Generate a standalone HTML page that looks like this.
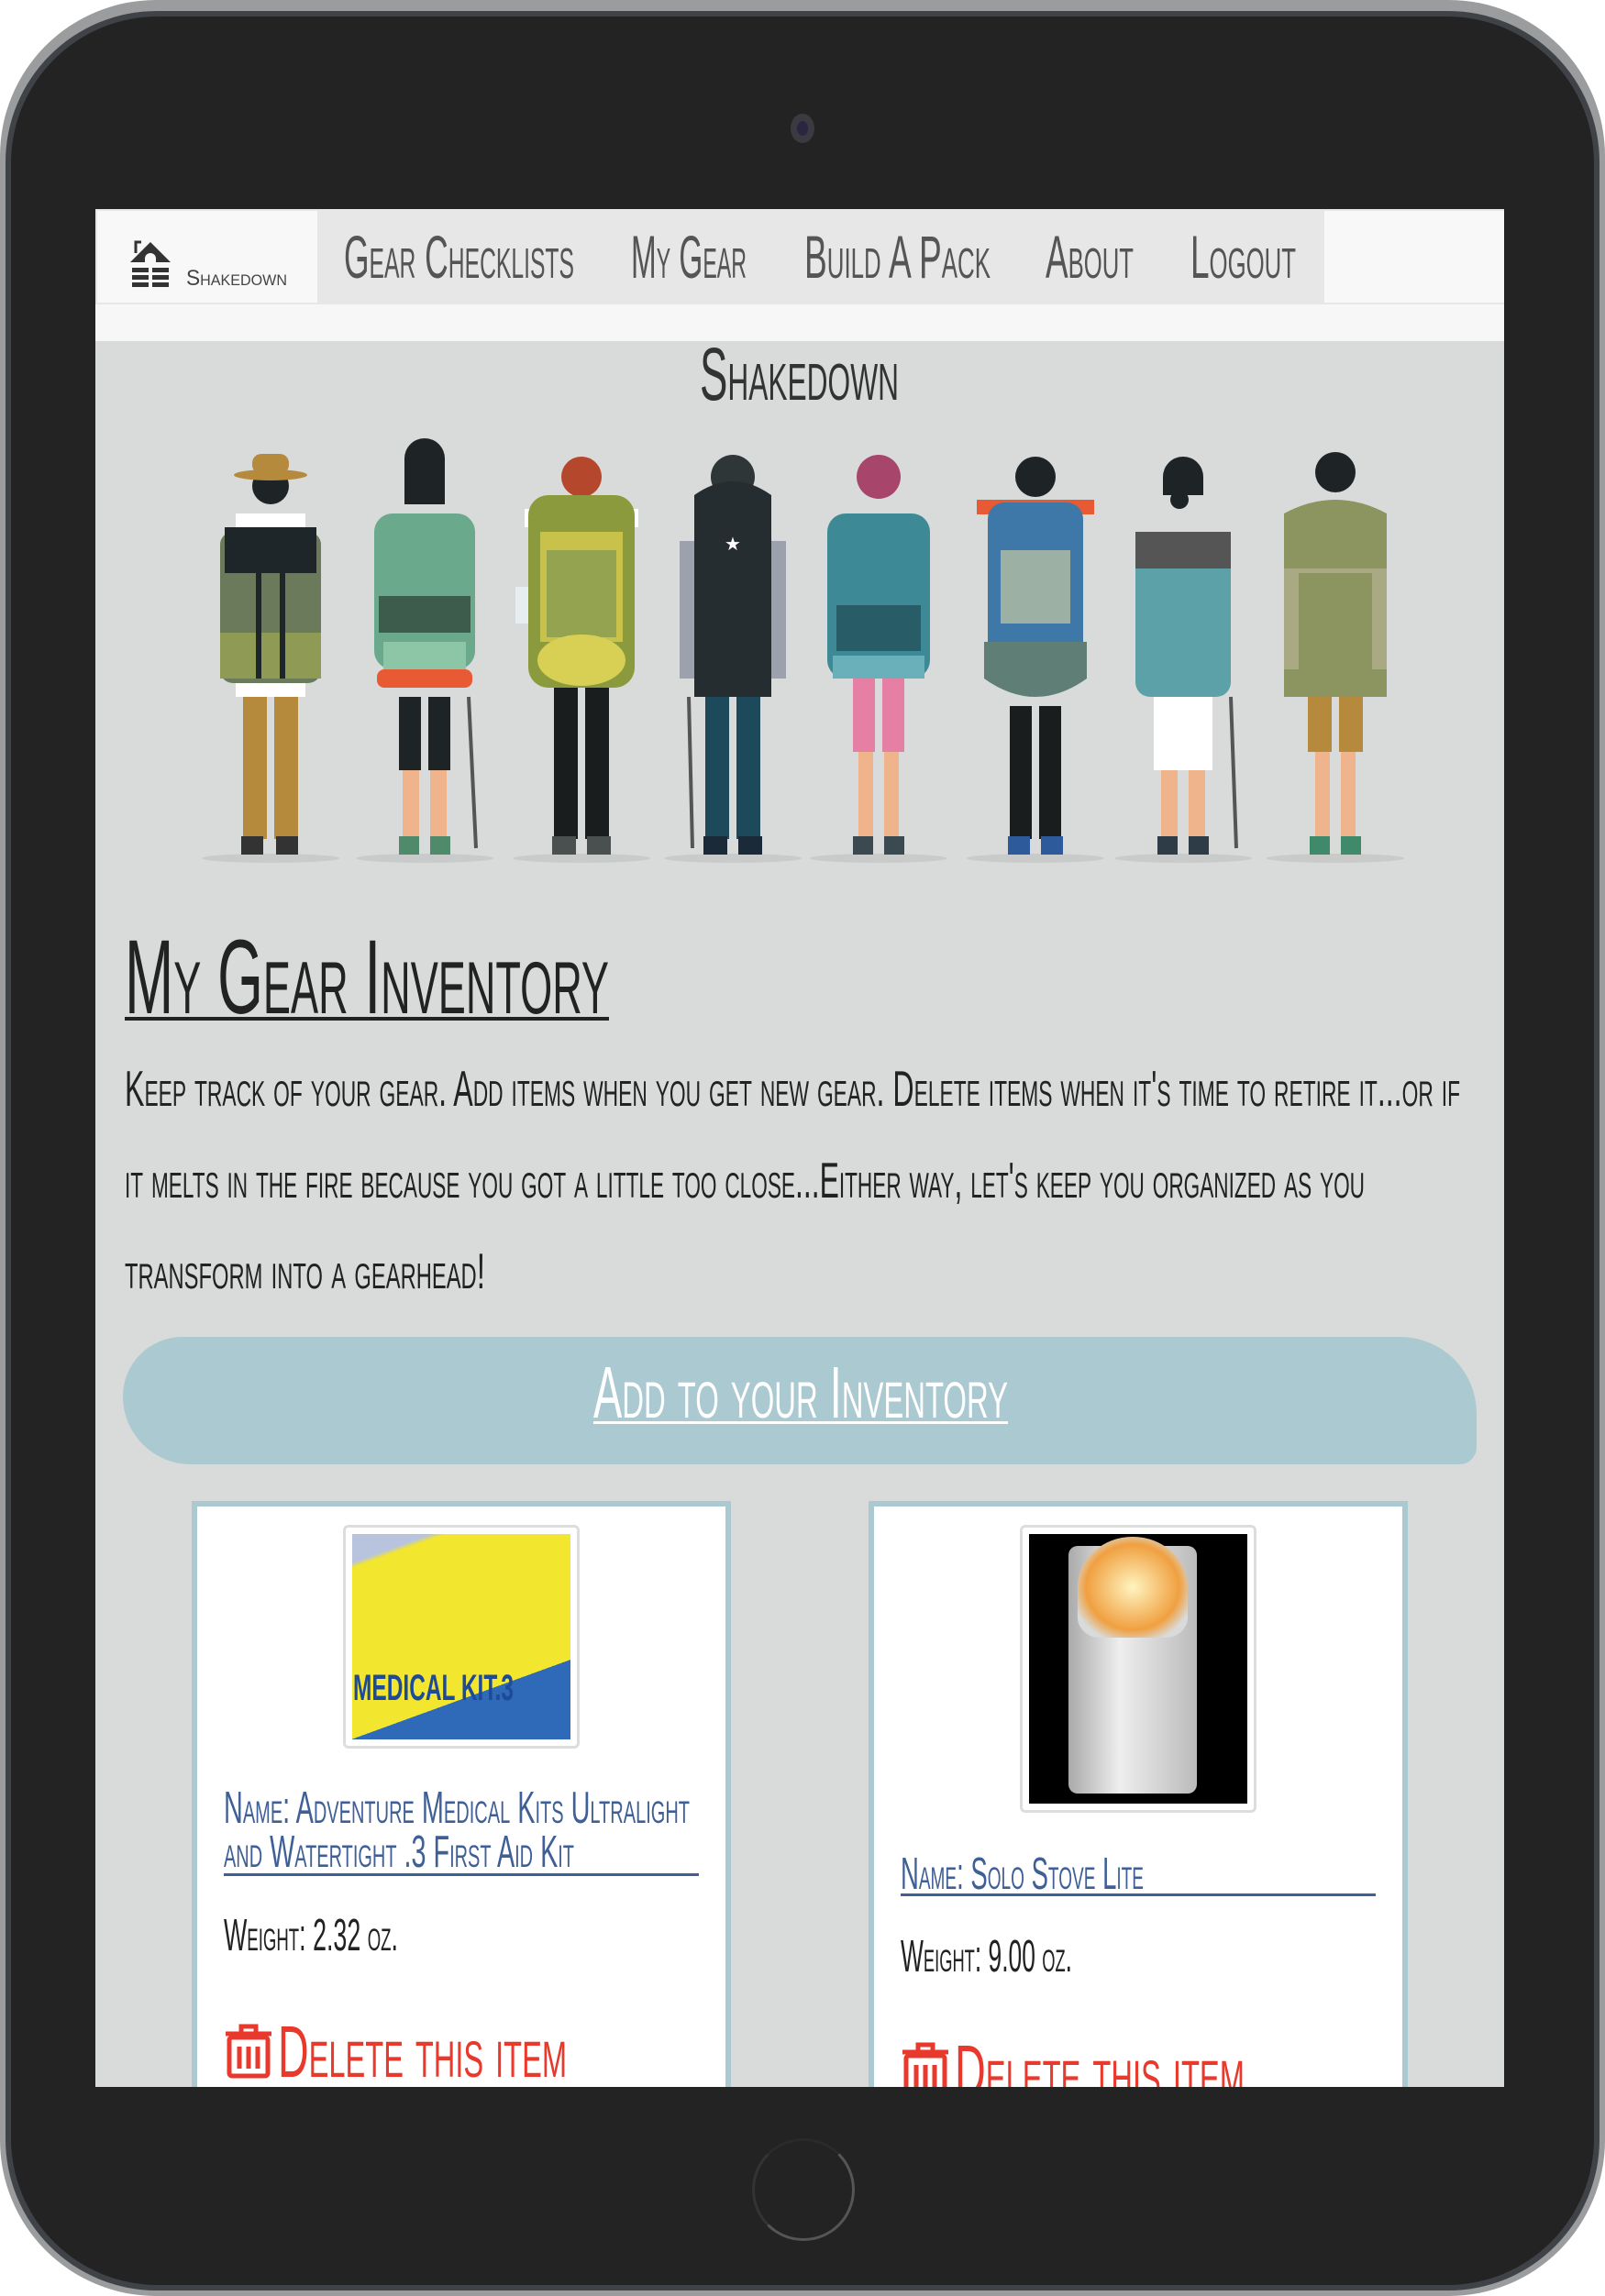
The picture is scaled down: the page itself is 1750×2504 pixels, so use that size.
<!DOCTYPE html>
<html><head><meta charset="utf-8"><style>
*{margin:0;padding:0;box-sizing:border-box}
body{width:1750px;height:2504px;background:#fff;position:relative;overflow:hidden;font-family:"Liberation Sans",sans-serif;}
.dev{position:absolute;left:0;top:0;width:1750px;height:2504px;border-radius:170px;background:#9a9c9e;}
.dev2{position:absolute;left:6px;top:12px;width:1738px;height:2486px;border-radius:165px;background:#3f4347;}
.dev3{position:absolute;left:12px;top:18px;width:1726px;height:2474px;border-radius:160px;background:#232323;}
.scr{position:absolute;left:104px;top:228px;width:1536px;height:2048px;background:#d9dbda;overflow:hidden}
.nav{position:absolute;left:0;top:0;width:1536px;height:104px;background:#e7e7e7}
.card{position:absolute;top:1409px;width:588px;height:700px;background:#fff;border:6px solid #abc9d0}
.imgbox{position:absolute;border:3px solid #ddd;border-radius:6px;background:#fff}
svg text{font-family:"Liberation Sans Narrow","Liberation Sans",sans-serif;font-variant:small-caps}
</style></head><body>
<div class="dev"></div><div class="dev2"></div><div class="dev3"></div>
<div style="position:absolute;left:862px;top:124px;width:26px;height:32px;border-radius:50%;background:#3a3a40"></div>
<div style="position:absolute;left:869px;top:132px;width:12px;height:16px;border-radius:50%;background:#2a2540"></div>
<div style="position:absolute;left:820px;top:2332px;width:112px;height:112px;border-radius:50%;border:3px solid #555;border-left-color:#333;border-top-color:#2a2a2a"></div>
<div class="scr">
 <div style="position:absolute;left:0;top:104px;width:1536px;height:40px;background:#f7f7f7"></div>
 <div class="nav"></div>
 <div style="position:absolute;left:2px;top:2px;width:240px;height:100px;background:#f8f8f8"></div>
 <div style="position:absolute;left:1340px;top:2px;width:196px;height:100px;background:#f8f8f8"></div>
 <svg style="position:absolute;left:34px;top:30px" width="52" height="60" viewBox="0 0 52 60"><path d="M4 28 L26 6 L48 28 Z" fill="#333"/><path d="M20 24 a6 6 0 0 1 12 0 v8 h-12z" fill="#f8f8f8"/><rect x="6" y="34" width="40" height="5" fill="#333"/><rect x="6" y="42" width="40" height="5" fill="#333"/><rect x="6" y="50" width="40" height="5" fill="#333"/><rect x="24" y="34" width="4" height="22" fill="#f8f8f8"/><path d="M10 18 v-12 h6" stroke="#333" stroke-width="3" fill="none"/></svg>
 <svg style="position:absolute;left:-104px;top:-228px" width="1750" height="1200">
  <g fill="#c9cbca"><ellipse cx="295" cy="936" rx="75" ry="5"/><ellipse cx="463" cy="936" rx="75" ry="5"/><ellipse cx="634" cy="936" rx="75" ry="5"/><ellipse cx="799" cy="936" rx="75" ry="5"/><ellipse cx="958" cy="936" rx="75" ry="5"/><ellipse cx="1129" cy="936" rx="75" ry="5"/><ellipse cx="1290" cy="936" rx="75" ry="5"/><ellipse cx="1456" cy="936" rx="75" ry="5"/></g>
  <g transform="translate(295,0)"><rect x="-38" y="560" width="76" height="200" fill="#fff"/><rect x="-30" y="760" width="26" height="155" fill="#b58a3c"/><rect x="4" y="760" width="26" height="155" fill="#b58a3c"/><rect x="-32" y="912" width="24" height="20" fill="#333"/><rect x="6" y="912" width="24" height="20" fill="#333"/><circle cx="0" cy="530" r="20" fill="#1e2326"/><ellipse cx="0" cy="518" rx="40" ry="6" fill="#b58a3c"/><rect x="-20" y="495" width="40" height="22" rx="10" fill="#b58a3c"/><rect x="-55" y="580" width="110" height="165" rx="14" fill="#6b7a5a"/><rect x="-50" y="575" width="100" height="50" fill="#1f2629"/><rect x="-55" y="690" width="110" height="50" fill="#8f9a55"/><rect x="-16" y="590" width="6" height="150" fill="#1f2629"/><rect x="10" y="590" width="6" height="150" fill="#1f2629"/></g>
  <g transform="translate(463,0)"><path d="M-22 500 a22 22 0 0 1 44 0 v50 h-44z" fill="#1e2326"/><rect x="-28" y="760" width="24" height="80" fill="#1e2326"/><rect x="4" y="760" width="24" height="80" fill="#1e2326"/><rect x="-24" y="840" width="18" height="75" fill="#efb48c"/><rect x="6" y="840" width="18" height="75" fill="#efb48c"/><rect x="-28" y="912" width="22" height="20" fill="#4f8a6a"/><rect x="6" y="912" width="22" height="20" fill="#4f8a6a"/><rect x="-55" y="560" width="110" height="170" rx="20" fill="#6aa98c"/><rect x="-50" y="650" width="100" height="40" fill="#3d5c4c"/><rect x="-45" y="700" width="90" height="30" fill="#8cc6a6"/><rect x="-52" y="730" width="104" height="20" rx="8" fill="#e85a34"/><line x1="48" y1="760" x2="56" y2="925" stroke="#555" stroke-width="4"/></g>
  <g transform="translate(634,0)"><circle cx="0" cy="520" r="22" fill="#b5482c"/><rect x="-30" y="740" width="26" height="175" fill="#1a1d1e"/><rect x="4" y="740" width="26" height="175" fill="#1a1d1e"/><rect x="-32" y="912" width="26" height="20" fill="#4a5050"/><rect x="6" y="912" width="26" height="20" fill="#4a5050"/><rect x="-62" y="555" width="18" height="20" fill="#fff"/><rect x="44" y="555" width="18" height="20" fill="#fff"/><rect x="-58" y="540" width="116" height="210" rx="22" fill="#8a9a3c"/><rect x="-45" y="580" width="90" height="120" fill="#c9c24a"/><rect x="-38" y="600" width="76" height="95" fill="#93a350"/><ellipse cx="0" cy="720" rx="48" ry="28" fill="#d8cf55"/><rect x="-72" y="640" width="14" height="40" fill="#e6eef2"/></g>
  <g transform="translate(799,0)"><circle cx="0" cy="520" r="24" fill="#2e3638"/><rect x="-30" y="760" width="26" height="155" fill="#1d4a5a"/><rect x="4" y="760" width="26" height="155" fill="#1d4a5a"/><rect x="-32" y="912" width="26" height="20" fill="#1a2a38"/><rect x="6" y="912" width="26" height="20" fill="#1a2a38"/><rect x="-58" y="590" width="116" height="150" fill="#9ca2ad"/><path d="M-42 540 q42 -30 84 0 v220 h-84z" fill="#262d30"/><text x="0" y="600" font-size="20" fill="#fff" text-anchor="middle">★</text><line x1="-48" y1="760" x2="-44" y2="925" stroke="#555" stroke-width="4"/></g>
  <g transform="translate(958,0)"><circle cx="0" cy="520" r="24" fill="#a8456a"/><rect x="-28" y="740" width="24" height="80" fill="#e67fa4"/><rect x="4" y="740" width="24" height="80" fill="#e67fa4"/><rect x="-22" y="820" width="16" height="95" fill="#efb48c"/><rect x="6" y="820" width="16" height="95" fill="#efb48c"/><rect x="-28" y="912" width="22" height="20" fill="#3a4a50"/><rect x="6" y="912" width="22" height="20" fill="#3a4a50"/><rect x="-56" y="560" width="112" height="180" rx="20" fill="#3d8a96"/><rect x="-46" y="660" width="92" height="50" fill="#285c66"/><rect x="-50" y="715" width="100" height="25" fill="#6ab0ba"/></g>
  <g transform="translate(1129,0)"><circle cx="0" cy="520" r="22" fill="#1e2326"/><rect x="-28" y="770" width="24" height="145" fill="#1a1d1e"/><rect x="4" y="770" width="24" height="145" fill="#1a1d1e"/><rect x="-30" y="912" width="24" height="20" fill="#2c5a9a"/><rect x="6" y="912" width="24" height="20" fill="#2c5a9a"/><rect x="-64" y="545" width="128" height="16" fill="#e85a34"/><rect x="-52" y="548" width="104" height="200" rx="18" fill="#3e78a8"/><rect x="-38" y="600" width="76" height="80" fill="#9cb0a4"/><path d="M-56 700 h112 v40 q-56 40 -112 0z" fill="#5e7e76"/></g>
  <g transform="translate(1290,0)"><path d="M-22 520 a22 22 0 0 1 44 0 v20 h-44z" fill="#1e2326"/><circle cx="-4" cy="545" r="10" fill="#1e2326"/><rect x="-32" y="760" width="64" height="80" fill="#fff"/><rect x="-24" y="840" width="18" height="75" fill="#efb48c"/><rect x="6" y="840" width="18" height="75" fill="#efb48c"/><rect x="-28" y="912" width="22" height="20" fill="#2e3c48"/><rect x="6" y="912" width="22" height="20" fill="#2e3c48"/><rect x="-52" y="580" width="104" height="180" rx="16" fill="#5ca0a8"/><rect x="-52" y="580" width="104" height="40" fill="#555"/><line x1="52" y1="760" x2="58" y2="925" stroke="#555" stroke-width="4"/></g>
  <g transform="translate(1456,0)"><circle cx="0" cy="515" r="22" fill="#1e2326"/><rect x="-30" y="740" width="26" height="80" fill="#b58a3c"/><rect x="4" y="740" width="26" height="80" fill="#b58a3c"/><rect x="-22" y="820" width="16" height="95" fill="#efb48c"/><rect x="6" y="820" width="16" height="95" fill="#efb48c"/><rect x="-28" y="912" width="22" height="20" fill="#3f8a6a"/><rect x="6" y="912" width="22" height="20" fill="#3f8a6a"/><path d="M-56 560 q56 -30 112 0 v200 h-112z" fill="#8c9460"/><rect x="-56" y="620" width="112" height="110" fill="#a9a983"/><rect x="-40" y="625" width="80" height="130" fill="#8c9460"/></g>
 </svg>
 <div style="position:absolute;left:30px;top:1230px;width:1476px;height:139px;background:#abc9d0;border-radius:70px 90px 20px 80px"></div>
 <div class="card" style="left:105px">
  <div class="imgbox" style="left:159px;top:20px;width:258px;height:244px"><div style="position:absolute;left:7px;top:7px;width:238px;height:224px;background:linear-gradient(160deg,#b8c4dd 0 10%,#f2e62e 12% 72%,#2e6ab8 72%)"></div><svg style="position:absolute;left:8px;top:150px" width="200" height="50"><text x="0" y="38" font-size="40" font-weight="bold" fill="#1e4a9a" textLength="175" lengthAdjust="spacingAndGlyphs" style="font-variant:normal">MEDICAL KIT.3</text></svg></div>
 </div>
 <div class="card" style="left:843px">
  <div class="imgbox" style="left:159px;top:20px;width:258px;height:314px"><div style="position:absolute;left:7px;top:7px;width:238px;height:294px;background:#000"></div><div style="position:absolute;left:50px;top:20px;width:140px;height:270px;background:linear-gradient(90deg,#aaa,#eee 40%,#bbb);border-radius:10px"></div><div style="position:absolute;left:60px;top:10px;width:120px;height:110px;background:radial-gradient(#fff4c0,#f0a040 60%,#d9dbda 80%);border-radius:50% 50% 20% 20%"></div></div>
 </div>
 <svg style="position:absolute;left:0;top:0" width="1536" height="2048">
  <g fill="#555">
   <text x="99" y="83" font-size="24" fill="#444" textLength="110" lengthAdjust="spacingAndGlyphs">Shakedown</text>
   <text x="271" y="75" font-size="66" textLength="251" lengthAdjust="spacingAndGlyphs">Gear Checklists</text>
   <text x="584" y="75" font-size="66" textLength="126" lengthAdjust="spacingAndGlyphs">My Gear</text>
   <text x="773" y="75" font-size="66" textLength="203" lengthAdjust="spacingAndGlyphs">Build A Pack</text>
   <text x="1036" y="75" font-size="66" textLength="96" lengthAdjust="spacingAndGlyphs">About</text>
   <text x="1194" y="75" font-size="66" textLength="115" lengthAdjust="spacingAndGlyphs">Logout</text>
  </g>
  <text x="659" y="208" font-size="82" fill="#333" textLength="217" lengthAdjust="spacingAndGlyphs">Shakedown</text>
  <text x="32" y="877" font-size="115" fill="#222" textLength="528" lengthAdjust="spacingAndGlyphs">My Gear Inventory</text>
  <rect x="32" y="881" width="528" height="4" fill="#222"/>
  <g fill="#222" font-size="55">
   <text x="32" y="978" textLength="1456" lengthAdjust="spacingAndGlyphs">Keep track of your gear. Add items when you get new gear. Delete items when it's time to retire it...or if</text>
   <text x="32" y="1078" textLength="1352" lengthAdjust="spacingAndGlyphs">it melts in the fire because you got a little too close...Either way, let's keep you organized as you</text>
   <text x="32" y="1177" textLength="393" lengthAdjust="spacingAndGlyphs">transform into a gearhead!</text>
  </g>
  <text x="543" y="1318" font-size="80" fill="#fff" textLength="452" lengthAdjust="spacingAndGlyphs">Add to your Inventory</text>
  <rect x="543" y="1322" width="452" height="3" fill="#fff"/>
  <g fill="#3f5f97" font-size="49">
   <text x="140" y="1760" textLength="508" lengthAdjust="spacingAndGlyphs">Name: Adventure Medical Kits Ultralight</text>
   <text x="140" y="1808" textLength="382" lengthAdjust="spacingAndGlyphs">and Watertight .3 First Aid Kit</text>
   <rect x="140" y="1815" width="518" height="3"/>
   <text x="878" y="1832" textLength="265" lengthAdjust="spacingAndGlyphs">Name: Solo Stove Lite</text>
   <rect x="878" y="1837" width="518" height="3"/>
  </g>
  <g fill="#222" font-size="49">
   <text x="140" y="1899" textLength="190" lengthAdjust="spacingAndGlyphs">Weight: 2.32 oz.</text>
   <text x="878" y="1922" textLength="187" lengthAdjust="spacingAndGlyphs">Weight: 9.00 oz.</text>
  </g>
  <g fill="#e8392c" font-size="80">
   <text x="199" y="2037" textLength="315" lengthAdjust="spacingAndGlyphs">Delete this item</text>
   <text x="937" y="2058" textLength="316" lengthAdjust="spacingAndGlyphs">Delete this item</text>
  </g>
  <g fill="none" stroke="#e8392c" stroke-width="5">
   <g transform="translate(140,1978)"><path d="M2 12 h50 M19 12 v-8 h16 v8"/><rect x="6" y="16" width="42" height="42" rx="3"/><path d="M17 26 v24 M27 26 v24 M37 26 v24"/></g>
   <g transform="translate(878,1998)"><path d="M2 12 h50 M19 12 v-8 h16 v8"/><rect x="6" y="16" width="42" height="42" rx="3"/><path d="M17 26 v24 M27 26 v24 M37 26 v24"/></g>
  </g>
 </svg>
</div>
</body></html>
